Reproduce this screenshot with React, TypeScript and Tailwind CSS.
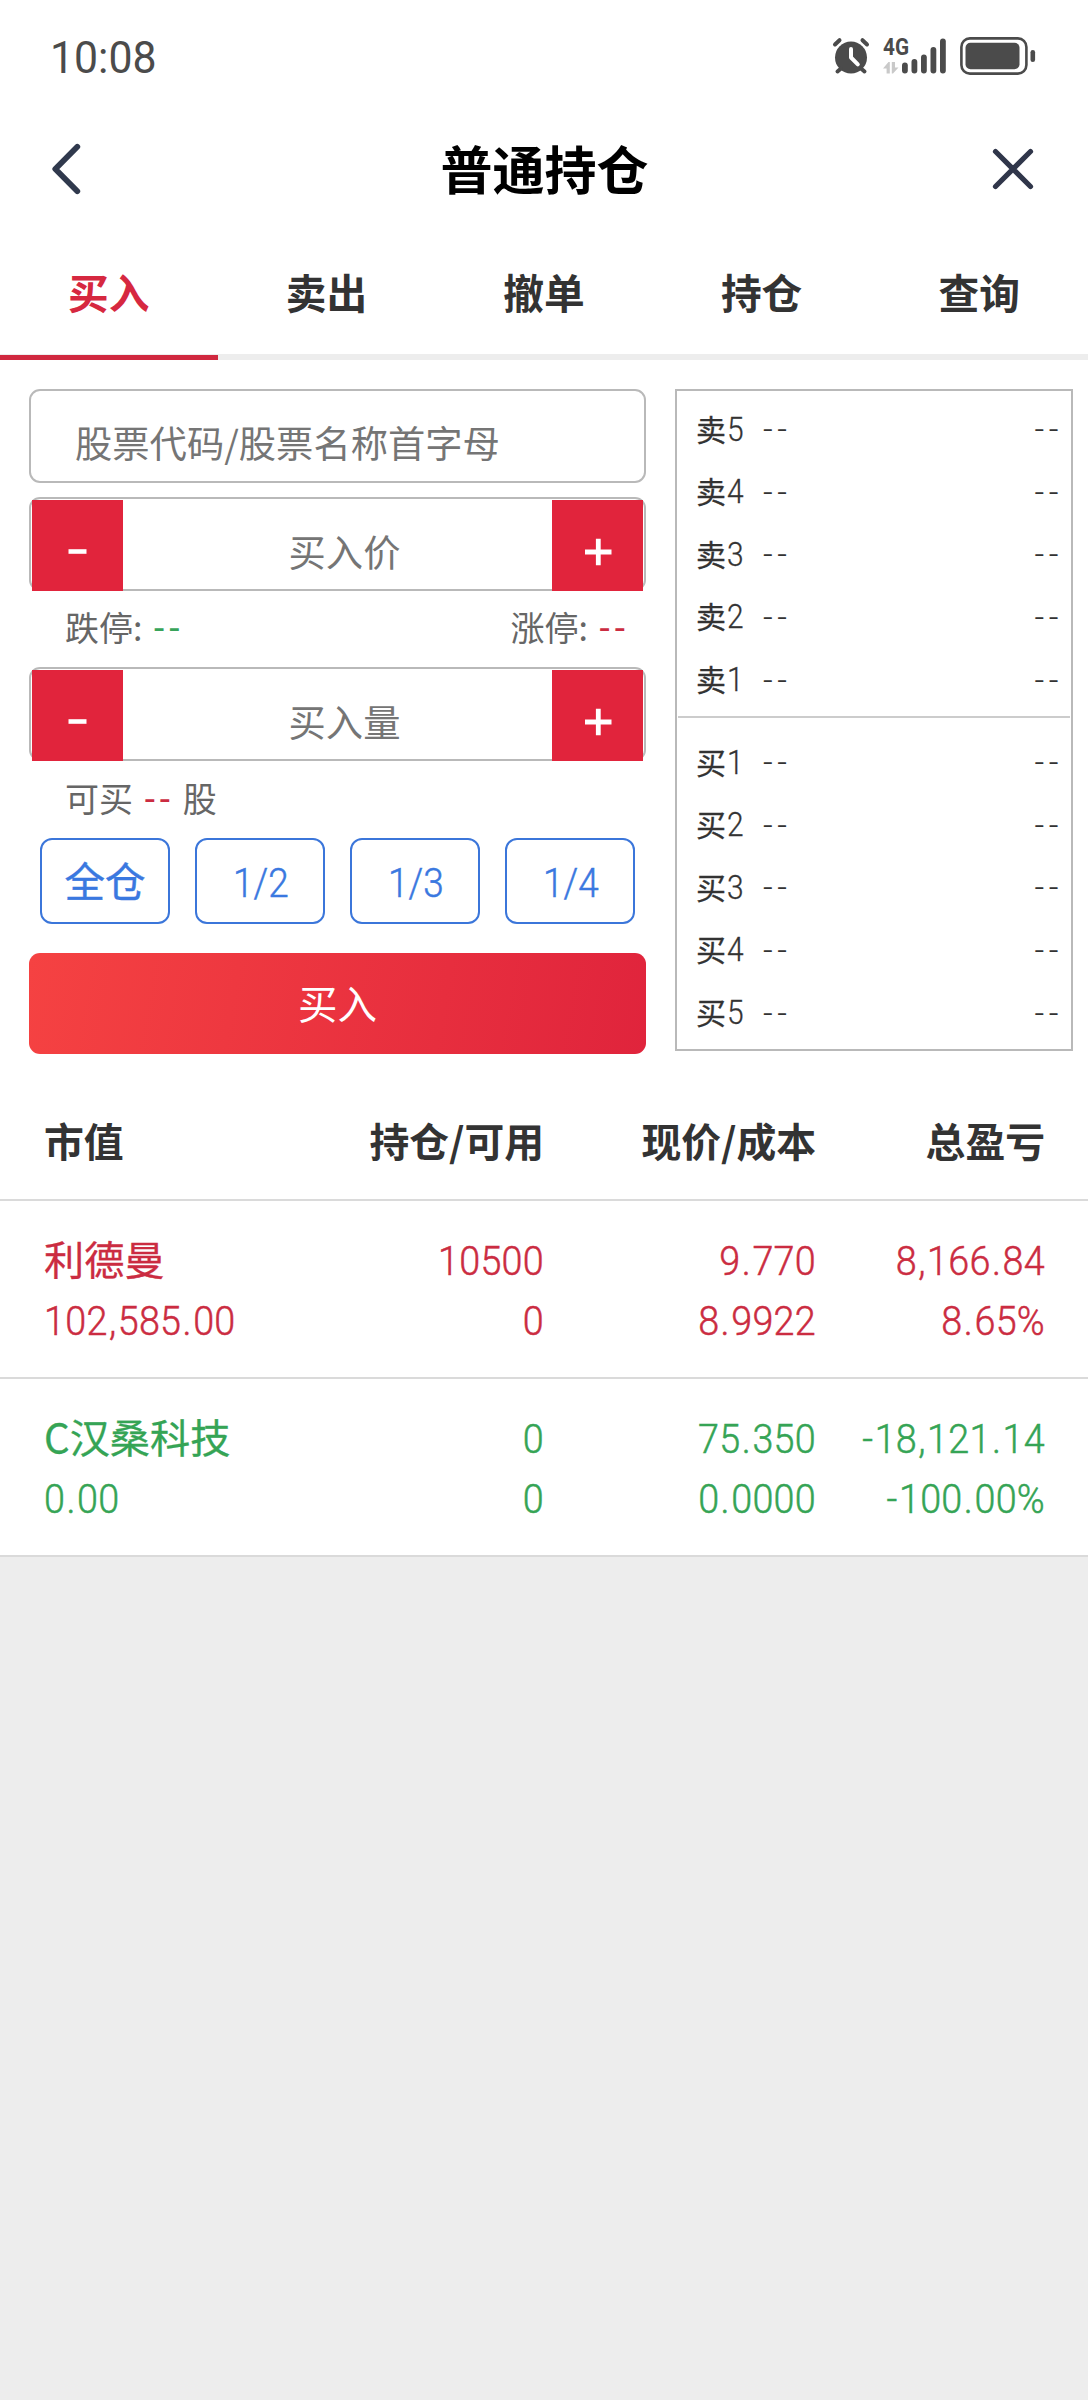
import clsx from 'clsx';

interface IPosition {
  name: string;
  marketValue: string;
  amount: string;
  available: string;
  price: string;
  cost: string;
  profit: string;
  profitRate: string;
  isUp: boolean;
}

const tabs = ['买入', '卖出', '撤单', '持仓', '查询'];
const shares = ['1/2', '1/3', '1/4'];
const sellLevels = [5, 4, 3, 2, 1];
const buyLevels = [1, 2, 3, 4, 5];

const positions: IPosition[] = [
  {
    name: '利德曼',
    marketValue: '102,585.00',
    amount: '10500',
    available: '0',
    price: '9.770',
    cost: '8.9922',
    profit: '8,166.84',
    profitRate: '8.65%',
    isUp: true,
  },
  {
    name: 'C汉桑科技',
    marketValue: '0.00',
    amount: '0',
    available: '0',
    price: '75.350',
    cost: '0.0000',
    profit: '-18,121.14',
    profitRate: '-100.00%',
    isUp: false,
  },
];

const StatusBar = () => (
  <div className="flex h-[112px] items-center justify-between pr-[52px] pl-[50px] text-[#4b4b4b]">
    <span className="origin-left scale-x-[0.95] pt-[2px] font-[Roboto] text-[45px] leading-none">
      10:08
    </span>
    <div className="flex items-center">
      <svg width="38" height="38" viewBox="0 0 38 38" fill="none">
        <circle cx="19" cy="20.5" r="16" fill="currentColor" />
        <path
          d="M3 7.5 7.5 3.2M35 7.5 30.5 3.2M9 31.5 5.5 34.5M29 31.5 32.5 34.5"
          stroke="currentColor"
          strokeWidth="4"
          strokeLinecap="round"
        />
        <path
          d="M19 12v8.5l6.8 6.8"
          stroke="#fff"
          strokeWidth="4"
          strokeLinecap="round"
          strokeLinejoin="round"
        />
      </svg>
      <div className="ml-[13px] flex h-[36px] items-end">
        <div className="flex h-[36px] w-[19px] flex-col justify-between">
          <span className="w-[28px] origin-left scale-x-[0.9] font-[Roboto] text-[23px] leading-[20px] font-bold">
            4G
          </span>
          <svg width="16" height="12" viewBox="0 0 16 12" fill="#c9c9c9">
            <path d="M0 6.5 5.5 0H6.8V11.5H3.6V6.5zM8.8 0H12V5.5H15.5L10 11.5H8.8z" />
          </svg>
        </div>
        <svg width="45" height="36" viewBox="0 0 45 36" fill="currentColor">
          <rect x="0" y="24.5" width="5.8" height="11" rx="2.9" />
          <rect x="9.5" y="21" width="5.8" height="14.5" rx="2.9" />
          <rect x="19" y="16.5" width="5.8" height="19" rx="2.9" />
          <rect x="28.5" y="9" width="5.8" height="26.5" rx="2.9" />
          <rect x="38" y="0.5" width="5.8" height="35" rx="2.9" />
        </svg>
      </div>
      <svg
        className="ml-[13px]"
        width="76"
        height="38"
        viewBox="0 0 76 38"
        fill="none"
      >
        <rect
          x="1.4"
          y="1.4"
          width="65"
          height="35.2"
          rx="8.5"
          stroke="currentColor"
          strokeWidth="2.6"
        />
        <rect x="5.5" y="5.8" width="54" height="26.4" rx="5" fill="currentColor" />
        <rect x="70.5" y="13" width="4.6" height="12" rx="2.3" fill="currentColor" />
      </svg>
    </div>
  </div>
);

const Header = () => (
  <header className="flex h-[114px] items-center justify-between pr-[51px] pl-[50px]">
    <button type="button">
      <svg width="46" height="54" viewBox="0 0 46 54" fill="none">
        <path
          d="M27.3 4.8 5.3 27l22 22.2"
          stroke="#30394d"
          strokeWidth="5.8"
          strokeLinecap="round"
          strokeLinejoin="round"
        />
      </svg>
    </button>
    <h1 className="-mt-[3px] ml-[2px] text-[52px] leading-none font-bold text-black">
      普通持仓
    </h1>
    <button type="button">
      <svg width="46" height="46" viewBox="0 0 46 46" fill="none">
        <path
          d="M4.5 5.5 39.5 40.5M39.5 5.5 4.5 40.5"
          stroke="#30364a"
          strokeWidth="5.2"
          strokeLinecap="round"
        />
      </svg>
    </button>
  </header>
);

const Stepper = ({ placeholder }: { placeholder: string }) => (
  <div className="flex h-[94px] justify-between rounded-[11px] border-2 border-[#b9b9b9] pt-px">
    <button
      type="button"
      className="ml-px flex size-[91px] shrink-0 items-center justify-center bg-[#e1243c]"
    >
      <svg width="28" height="28" viewBox="0 0 28 28">
        <path d="M4.5 19.5h18" stroke="#fff" strokeWidth="4.6" />
      </svg>
    </button>
    <input
      type="text"
      placeholder={placeholder}
      className="h-[89px] min-w-0 flex-1 pt-[13px] pl-[14px] text-center text-[37.3px] outline-none placeholder:text-[#757575]"
    />
    <button
      type="button"
      className="mr-px flex size-[91px] shrink-0 items-center justify-center bg-[#e1243c]"
    >
      <svg width="28" height="40" viewBox="0 0 28 40">
        <path d="M1 26h26.5M14.3 12.8v26.4" stroke="#fff" strokeWidth="4.8" />
      </svg>
    </button>
  </div>
);

const Dashes = ({ className }: { className: string }) => (
  <span
    className={clsx(
      'ml-[4px] font-[Roboto] text-[37px] leading-none tracking-[5px]',
      className,
    )}
  >
    --
  </span>
);

const OrderForm = () => (
  <div className="w-[617px]">
    <input
      type="text"
      placeholder="股票代码/股票名称首字母"
      className="block h-[94px] w-full rounded-[11px] border-2 border-[#b9b9b9] pt-[12px] pl-[44px] text-[37.3px] outline-none placeholder:text-[#757575]"
    />
    <div className="mt-[14px]">
      <Stepper placeholder="买入价" />
    </div>
    <div className="flex h-[76px] items-center justify-between pr-[16px] pb-[2px] pl-[36px] text-[34px] leading-none text-[#666]">
      <span>
        跌停: <Dashes className="text-[#38a35a]" />
      </span>
      <span>
        涨停: <Dashes className="text-[#cb2c41]" />
      </span>
    </div>
    <Stepper placeholder="买入量" />
    <div className="flex h-[77px] items-center pb-px pl-[36px] text-[34px] leading-none text-[#666]">
      <span>
        可买 <Dashes className="text-[#cb2c41]" /> 股
      </span>
    </div>
    <div className="ml-[11px] flex gap-[25px]">
      <button
        type="button"
        className="flex h-[86px] w-[130px] items-center justify-center rounded-[12px] border-2 border-[#3b76da] pb-[2px] text-[40.5px] leading-none text-[#3a78e0] [-webkit-text-stroke:0.4px]"
      >
        全仓
      </button>
      {shares.map((share) => (
        <button
          key={share}
          type="button"
          className="flex h-[86px] w-[130px] items-center justify-center rounded-[12px] border-2 border-[#3b76da] pt-[4px] pl-[2px] font-[Roboto] text-[41px] leading-none font-light text-[#3a78e0] [-webkit-text-stroke:0.5px]"
        >
          <span className="scale-x-[0.9]">{share}</span>
        </button>
      ))}
    </div>
    <button
      type="button"
      className="mt-[29px] flex h-[101px] w-full items-center justify-center rounded-[11px] bg-[linear-gradient(100deg,#f54242,#e0243c)] pb-[3px] text-[39.5px] leading-none text-white"
    >
      买入
    </button>
  </div>
);

const QuoteRow = ({ side, level }: { side: string; level: number }) => (
  <div className="flex h-[62.6px] items-center leading-none">
    <span className="w-[67px] text-[30px] [-webkit-text-stroke:0.3px]">
      {side}
      <span className="ml-px inline-block origin-left scale-x-[0.92] font-[Roboto] text-[32.5px] font-light">
        {level}
      </span>
    </span>
    <span className="flex-1 font-[Roboto] text-[34px] font-light tracking-[4.5px]">
      --
    </span>
    <span className="font-[Roboto] text-[34px] font-light tracking-[4.5px]">
      --
    </span>
  </div>
);

const OrderBook = () => (
  <div className="h-[662px] w-[398px] border-2 border-[#b9b9b9] px-px text-[#333]">
    <div className="h-[327px] border-b-2 border-[#ccc] pt-[7px] pr-[7px] pl-[18px]">
      {sellLevels.map((level) => (
        <QuoteRow key={level} side="卖" level={level} />
      ))}
    </div>
    <div className="pt-[13px] pr-[7px] pl-[18px]">
      {buyLevels.map((level) => (
        <QuoteRow key={level} side="买" level={level} />
      ))}
    </div>
  </div>
);

// digits are condensed toward the aligned side, punctuation keeps some air
const Num = ({ value, left }: { value: string; left?: boolean }) => (
  <span
    className={clsx(
      'block scale-x-[0.92] font-[Roboto] text-[41px] leading-[60px] font-light tracking-[0.3px] whitespace-nowrap [-webkit-text-stroke:0.5px]',
      left ? 'origin-left' : 'origin-right',
    )}
  >
    {value.split(/([.,-])/).map((part, index) => (
      <span key={index} className={clsx(/^[.,-]$/.test(part) && 'px-[1.4px]')}>
        {part}
      </span>
    ))}
  </span>
);

const PositionRow = ({ position }: { position: IPosition }) => (
  <div
    className={clsx(
      'grid h-[178px] grid-cols-[272px_228px_272px_229px] border-b-2 border-[#dadada] pt-[30px] pl-[44px] text-right',
      position.isUp ? 'text-[#cb2c41]' : 'text-[#35a455]',
    )}
  >
    <div className="text-left">
      <span className="block h-[60px] text-[40.2px] leading-[54px] whitespace-nowrap [-webkit-text-stroke:0.3px]">
        {position.name}
      </span>
      <Num value={position.marketValue} left />
    </div>
    <div>
      <Num value={position.amount} />
      <Num value={position.available} />
    </div>
    <div>
      <Num value={position.price} />
      <Num value={position.cost} />
    </div>
    <div>
      <Num value={position.profit} />
      <Num value={position.profitRate} />
    </div>
  </div>
);

export default function App() {
  return (
    <div className="min-h-[2400px] w-[1088px] bg-[#ededed] font-['Noto_Sans_CJK_SC',sans-serif]">
      <div className="bg-white">
        <StatusBar />
        <Header />
        <nav className="flex h-[134px] border-b-[6px] border-[#ededed]">
          {tabs.map((tab, index) => (
            <button
              key={tab}
              type="button"
              className={clsx(
                '-mb-[6px] flex-1 border-b-[5px] pt-[3px] text-[40.7px] leading-none font-bold',
                index === 0
                  ? 'border-[#d0283f] text-[#d62840]'
                  : 'border-transparent text-[#333]',
              )}
            >
              {tab}
            </button>
          ))}
        </nav>
        <div className="flex h-[694px] gap-[29px] pt-[29px] pl-[29px]">
          <OrderForm />
          <OrderBook />
        </div>
        <div className="grid h-[147px] grid-cols-[272px_228px_272px_229px] items-center border-b-2 border-[#dadada] pt-[27px] pl-[44px] text-right text-[39.8px] leading-none font-bold text-[#333]">
          <span className="text-left">市值</span>
          <span>持仓/可用</span>
          <span>现价/成本</span>
          <span>总盈亏</span>
        </div>
        {positions.map((position) => (
          <PositionRow key={position.name} position={position} />
        ))}
      </div>
    </div>
  );
}
